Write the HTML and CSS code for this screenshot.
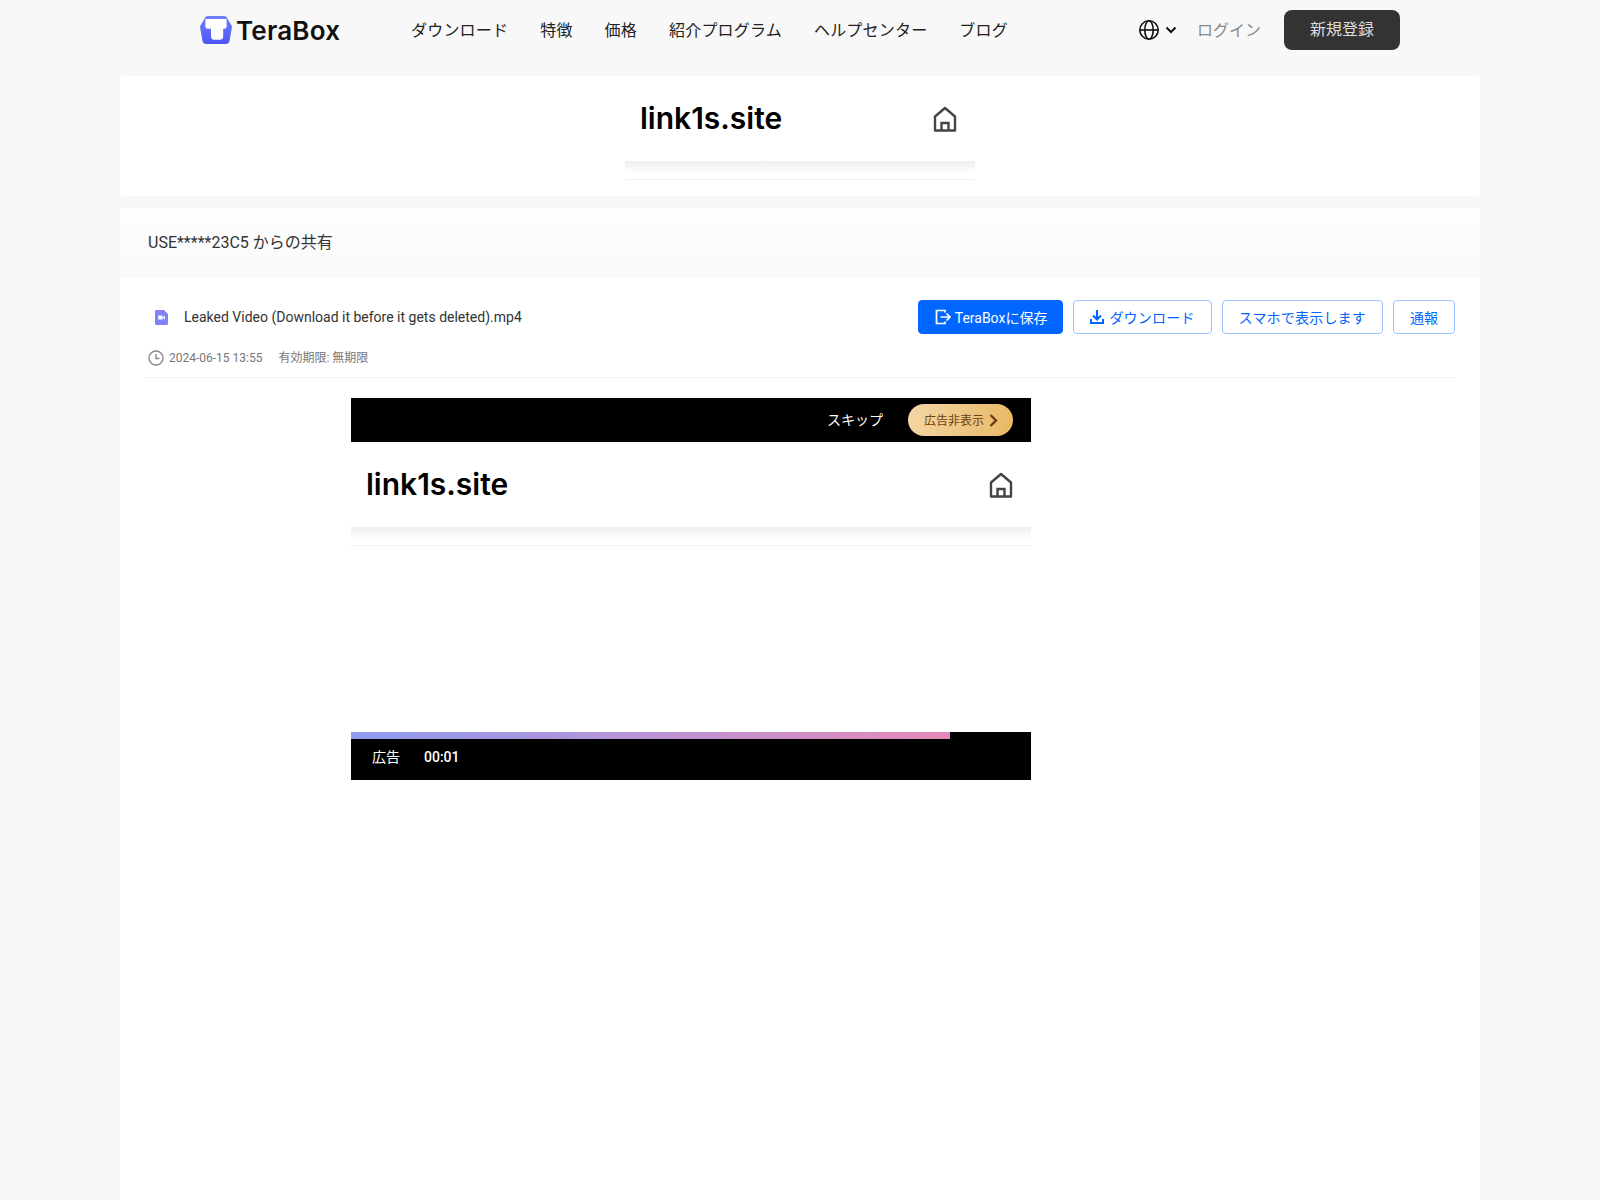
FILE: index.html
```html
<!DOCTYPE html>
<html lang="ja">
<head>
    <meta charset="UTF-8">
    <meta name="viewport" content="width=device-width, initial-scale=1.0">
    <title>TeraBox</title>
    <link rel="stylesheet" href="styles.css">
</head>
<body>
    <header class="topbar">
        <a class="logo" href="#">
            <svg class="logo-mark" width="32" height="28" viewBox="0 0 32 28">
                <defs>
                    <linearGradient id="logoFill" x1="0" y1="0" x2="0" y2="1">
                        <stop offset="0" stop-color="#7080ff"/>
                        <stop offset="1" stop-color="#4d55f5"/>
                    </linearGradient>
                </defs>
                <path d="M8 0H24C25.4 0 26.5 0.7 27.1 1.9L31.4 9.2C31.9 10 32 10.8 31.9 11.6L29.6 24.6C29.3 26.6 27.8 28 25.8 28H6.2C4.2 28 2.7 26.6 2.4 24.6L0.1 11.6C0 10.8 0.1 10 0.6 9.2L4.9 1.9C5.5 0.7 6.6 0 8 0Z" fill="url(#logoFill)"/>
                <path d="M5.4 3H26.6V10.6C26.6 11.9 25.7 12.8 24.4 12.8H23.2V20.6C23.2 22.6 22 23.8 20 23.8H14.2C12.2 23.8 11 22.6 11 20.6V12.8H7.6C6.3 12.8 5.4 11.9 5.4 10.6Z" fill="#fff"/>
            </svg>
            <span class="logo-text">TeraBox</span>
        </a>
        <nav class="nav">
            <a href="#">ダウンロード</a>
            <a href="#">特徴</a>
            <a href="#">価格</a>
            <a href="#">紹介プログラム</a>
            <a href="#">ヘルプセンター</a>
            <a href="#">ブログ</a>
        </nav>
        <div class="account">
            <span class="lang">
                <svg width="22" height="22" viewBox="0 0 22 22" fill="none" stroke="#111" stroke-width="1.6">
                    <circle cx="11" cy="11" r="9.2"/>
                    <ellipse cx="11" cy="11" rx="4.2" ry="9.2"/>
                    <path d="M2 11H20"/>
                </svg>
                <svg width="12" height="8" viewBox="0 0 12 8" fill="none" stroke="#111" stroke-width="2">
                    <path d="M1.5 1.5L6 6L10.5 1.5"/>
                </svg>
            </span>
            <a class="login" href="#">ログイン</a>
            <a class="signup" href="#">新規登録</a>
        </div>
    </header>

    <main class="page">
        <section class="card brand-card">
            <div class="brand-banner">
                <span class="brand-name">link1s.site</span>
                <svg class="home-icon" width="26" height="26" viewBox="0 0 26 26" fill="none" stroke="#444" stroke-width="2.4">
                    <path d="M3 24.5V10.5L13 2L23 10.5V24.5Z" stroke-linejoin="round"/>
                    <path d="M9.5 24.5V17H16.5V24.5"/>
                </svg>
            </div>
            <div class="brand-foot"></div>
        </section>

        <section class="card share-card">
            <div class="share-head">USE*****23C5 からの共有</div>
            <div class="share-body">
                <div class="file-row">
                    <div class="file-name">
                        <svg width="13" height="15" viewBox="0 0 13 15">
                            <path d="M1.5 0H9L13 4V13.5C13 14.4 12.4 15 11.5 15H1.5C0.6 15 0 14.4 0 13.5V1.5C0 0.6 0.6 0 1.5 0Z" fill="#8083f5"/>
                            <path d="M3.2 5.6H7.6V9.6H3.2ZM8.2 7L10 5.8V9.4L8.2 8.2Z" fill="#fff"/>
                        </svg>
                        <span>Leaked Video (Download it before it gets deleted).mp4</span>
                    </div>
                    <div class="file-actions">
                        <a class="btn btn-primary" href="#">
                            <svg width="16" height="16" viewBox="0 0 16 16" fill="none" stroke="#fff" stroke-width="1.7">
                                <path d="M10 3.5V1.5H1.5V14.5H10V12.5"/>
                                <path d="M5.5 8H15M11.5 4.5L15 8L11.5 11.5"/>
                            </svg>
                            TeraBoxに保存
                        </a>
                        <a class="btn btn-outline" href="#">
                            <svg width="14" height="14" viewBox="0 0 14 14" fill="none" stroke="#06f" stroke-width="2">
                                <path d="M7 0V9M3 5.5L7 9.5L11 5.5"/>
                                <path d="M1 9V13H13V9"/>
                            </svg>
                            ダウンロード
                        </a>
                        <a class="btn btn-outline" href="#">スマホで表示します</a>
                        <a class="btn" href="#">通報</a>
                    </div>
                </div>
                <div class="file-meta">
                    <svg width="16" height="16" viewBox="0 0 16 16" fill="none" stroke="#8a8a8a" stroke-width="1.4">
                        <circle cx="8" cy="8" r="7"/>
                        <path d="M8 4V8.5H11.5"/>
                    </svg>
                    <span class="meta-date">2024-06-15 13:55</span>
                    <span class="meta-expiry">有効期限: 無期限</span>
                </div>

                <div class="ad">
                    <div class="ad-top">
                        <span class="ad-skip">スキップ</span>
                        <a class="ad-hide" href="#">
                            <span class="ad-hide-label">広告非表示</span>
                            <svg width="9" height="13" viewBox="0 0 9 13" fill="none" stroke="#6b3f12" stroke-width="2.4">
                                <path d="M1.5 1L7 6.5L1.5 12"/>
                            </svg>
                        </a>
                    </div>
                    <div class="ad-stage">
                        <div class="ad-banner">
                            <span class="brand-name">link1s.site</span>
                            <svg class="home-icon" width="26" height="26" viewBox="0 0 26 26" fill="none" stroke="#444" stroke-width="2.4">
                                <path d="M3 24.5V10.5L13 2L23 10.5V24.5Z" stroke-linejoin="round"/>
                                <path d="M9.5 24.5V17H16.5V24.5"/>
                            </svg>
                        </div>
                        <div class="ad-line"></div>
                    </div>
                    <div class="ad-progress"><div class="ad-progress-fill" style="width: 88.1%"></div></div>
                    <div class="ad-bottom">
                        <span class="ad-label">広告</span>
                        <span class="ad-time">00:01</span>
                    </div>
                </div>
            </div>
        </section>
    </main>
</body>
</html>
```

FILE: styles.css
```css
* {
    box-sizing: border-box;
}
html, body {
    height: 100%;
}
body {
    margin: 0;
    background: #f7f7f7;
    font-family: Roboto, "Noto Sans CJK JP", sans-serif;
    color: #333;
    overflow: hidden;
}
a {
    text-decoration: none;
    color: inherit;
}

.topbar {
    display: flex;
    align-items: center;
    height: 66px;
    padding: 0 200px 6px;
    background: #f8f8f8;
}
.logo {
    display: flex;
    align-items: center;
    gap: 4px;
    width: 211px;
}
.logo-text {
    font-family: Inter, sans-serif;
    font-size: 26px;
    font-weight: 600;
    color: #111;
    letter-spacing: 0.2px;
}
.nav {
    display: flex;
    gap: 32px;
    margin-bottom: 2px;
    font-size: 16px;
    letter-spacing: 0.2px;
    color: #222;
}
.account {
    display: flex;
    align-items: center;
    margin-left: auto;
}
.lang {
    display: flex;
    align-items: center;
    gap: 5px;
    margin-right: 20px;
}
.login {
    margin: 0 23px 2px 0;
    font-size: 16px;
    color: #888;
}
.signup {
    display: block;
    width: 116px;
    height: 40px;
    line-height: 40px;
    text-align: center;
    background: #333;
    color: #ddd;
    font-size: 16px;
    border-radius: 8px;
}

.page {
    width: 1360px;
    margin: 10px auto 0;
}
.card {
    background: #fff;
    border-radius: 4px;
}
.brand-card {
    height: 120px;
    margin-bottom: 12px;
}
.brand-banner {
    display: flex;
    align-items: center;
    justify-content: space-between;
    width: 350px;
    height: 85px;
    margin: 0 auto;
    padding: 0 17px 0 15px;
}
.brand-foot {
    width: 350px;
    height: 19px;
    margin: 0 auto;
    background: linear-gradient(#eee, #fff 70%);
    border-bottom: 1px solid #f2f2f2;
}
.brand-name {
    margin-bottom: 2px;
    font-family: Inter, sans-serif;
    font-size: 30px;
    font-weight: 600;
    color: #000;
}
.home-icon {
    flex: none;
}

.share-card {
    min-height: 1000px;
}
.share-head {
    height: 70px;
    line-height: 70px;
    padding-left: 28px;
    font-size: 16px;
    color: #333;
    background: linear-gradient(#fefefe, #f9f9f9);
    border-radius: 4px 4px 0 0;
}
.share-body {
    padding: 22px 25px 0;
}
.file-row {
    display: flex;
    justify-content: space-between;
}
.file-name {
    display: flex;
    align-items: center;
    gap: 16px;
    height: 34px;
    padding-left: 10px;
    font-size: 14px;
    color: #333;
}
.file-actions {
    display: flex;
    gap: 10px;
}
.btn {
    display: flex;
    align-items: center;
    height: 34px;
    padding: 0 16px;
    font-size: 14px;
    color: #06f;
    background: #fff;
    border: 1px solid #99c2ff;
    border-radius: 4px;
}
.btn-primary {
    gap: 4px;
    padding-right: 15px;
    color: #fff;
    background: #06f;
    border-color: #06f;
}
.btn-outline {
    gap: 5px;
    letter-spacing: 0.2px;
}
.file-meta {
    display: flex;
    align-items: center;
    height: 44px;
    padding: 4px 0 0 3px;
    border-bottom: 1px solid #f2f2f2;
    font-size: 12px;
    color: #777;
}
.file-meta svg {
    margin-right: 5px;
}
.meta-date {
    margin-right: 16px;
}
.meta-expiry {
    margin-bottom: 2px;
}

.ad {
    width: 680px;
    margin: 20px 0 0 206px;
}
.ad-top {
    display: flex;
    align-items: center;
    justify-content: flex-end;
    gap: 25px;
    height: 44px;
    padding-right: 18px;
    background: #000;
    color: #fff;
    font-size: 14px;
}
.ad-skip {
    margin-bottom: 2px;
}
.ad-hide {
    display: flex;
    align-items: center;
    gap: 5px;
    height: 32px;
    padding: 0 15px 0 16px;
    font-size: 12px;
    color: #6b3f12;
    background: linear-gradient(100deg, #f3d7a6, #e9b865);
    border-radius: 16px;
}
.ad-hide-label {
    margin-bottom: 2px;
}
.ad-stage {
    height: 290px;
    background: #fff;
}
.ad-banner {
    display: flex;
    align-items: center;
    justify-content: space-between;
    height: 85px;
    padding: 0 17px 0 15px;
}
.ad-line {
    height: 19px;
    background: linear-gradient(#eee, #fff 70%);
    border-bottom: 1px solid #f2f2f2;
}
.ad-progress {
    height: 7px;
    background: #000;
}
.ad-progress-fill {
    height: 100%;
    background: linear-gradient(90deg, #8f9cf0, #e58ab8);
}
.ad-bottom {
    display: flex;
    align-items: center;
    gap: 24px;
    height: 41px;
    padding: 0 0 5px 21px;
    background: #000;
    color: #fff;
    font-size: 14px;
}
.ad-label {
    margin-bottom: 2px;
}
.ad-time {
    font-weight: 500;
}
```
